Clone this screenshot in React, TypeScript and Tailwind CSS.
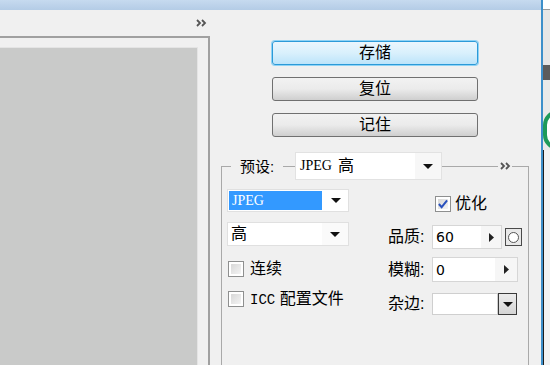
import React from "react";

const line = "border-[#a9a9a9]";

function Arrow({ dir = "down" }: { dir?: "down" | "right" }) {
  if (dir === "right")
    return (
      <svg width="5" height="9" viewBox="0 0 5 9">
        <path d="M0 0 L5 4.5 L0 9 Z" fill="#222" />
      </svg>
    );
  return (
    <svg width="10" height="5" viewBox="0 0 10 5">
      <path d="M0 0 L10 0 L5 5 Z" fill="#111" />
    </svg>
  );
}

function Chevrons() {
  return (
    <svg width="11" height="8" viewBox="0 0 11 8">
      <path d="M1 1 L4 4 L1 7 M6 1 L9 4 L6 7" stroke="#555" strokeWidth="1.8" fill="none" />
    </svg>
  );
}

function CheckBox({ checked = false }: { checked?: boolean }) {
  return (
    <div className="w-[16px] h-[16px] border border-[#8e8f8f] bg-white p-[2px]">
      <div className="w-full h-full bg-gradient-to-br from-[#d8d8d8] to-[#f4f4f4] flex items-center justify-center">
        {checked && (
          <svg width="11" height="10" viewBox="0 0 11 10">
            <path d="M1 5 L4 8.5 L10 1" stroke="#2a52be" strokeWidth="2.2" fill="none" />
          </svg>
        )}
      </div>
    </div>
  );
}

function Btn({ label, focus = false }: { label: string; focus?: boolean }) {
  return (
    <div
      className={
        focus
          ? "w-[206px] h-[24px] rounded-[3px] border border-[#2c9ad8] shadow-[0_0_0_1px_#8fd3f5] bg-gradient-to-b from-[#eaf6fd] via-[#d9f0fc] to-[#bce4fa] flex items-center justify-center text-[16px] leading-none"
          : "w-[206px] h-[24px] rounded-[3px] border border-[#707070] bg-gradient-to-b from-[#f2f2f2] via-[#ebebeb] to-[#cfcfcf] flex items-center justify-center text-[16px] leading-none"
      }
    >
      {label}
    </div>
  );
}

export default function App() {
  return (
    <div className="w-[550px] h-[365px] overflow-hidden bg-[#f0f0f0] flex text-black font-['Liberation_Sans','Noto_Sans_CJK_SC',sans-serif]">
      {/* main window */}
      <div className="w-[541px] flex flex-col">
        <div className="h-[10px] bg-gradient-to-b from-[#c6daef] to-[#b4cce6]" />
        <div className="flex flex-1">
          {/* left preview panel */}
          <div className="w-[210px] flex flex-col">
            <div className="h-[26px] flex items-center justify-end pr-[3px]">
              <Chevrons />
            </div>
            <div className="flex-1 border-t-2 border-r-2 border-[#a0a0a0] pt-[9px] pr-[10px]">
              <div className="h-full bg-[#c9cac9] border-t border-r border-[#e4e4e4]" />
            </div>
          </div>

          {/* right settings panel */}
          <div className="w-[331px] flex flex-col">
            <div className="pl-[62px] pt-[31px] flex flex-col gap-[12px]">
              <Btn label="存储" focus />
              <Btn label="复位" />
              <Btn label="记住" />
            </div>

            {/* group box header */}
            <div className="ml-[11px] w-[308px] mt-[15px] h-[28px] flex">
              <div className={`w-[10px] h-[14px] self-end border-t border-l ${line}`} />
              <div className="w-[52px] flex items-center justify-center text-[15px] leading-none">预设:</div>
              <div className={`w-[12px] h-[14px] self-end border-t ${line}`} />
              <div className="w-[147px] h-[28px] bg-white border border-[#e2e2e2] flex items-center">
                <div className="flex-1 pl-[4px] text-[16px] leading-none flex items-center gap-[6px]">
                  <span className="font-['Liberation_Serif',serif] text-[14px]">JPEG</span>
                  <span>高</span>
                </div>
                <div className="w-[26px] h-full bg-[#f7f7f7] flex items-center justify-center">
                  <Arrow />
                </div>
              </div>
              <div className={`w-[56px] h-[14px] self-end border-t ${line}`} />
              <div className="w-[14px] flex items-center justify-center">
                <Chevrons />
              </div>
              <div className={`flex-1 h-[14px] self-end border-t border-r ${line}`} />
            </div>

            {/* group box body */}
            <div className={`ml-[11px] w-[308px] flex-1 border-l border-r ${line} flex`}>
              <div className="pl-[5px] pt-[9px] w-[133px] flex flex-col">
                <div className="w-[122px] h-[23px] bg-white border border-[#e0e0e0] flex items-center p-[1px]">
                  <div className="w-[93px] h-full bg-[#3399ff] text-white flex items-center pl-[3px] font-['Liberation_Serif',serif] text-[14px] leading-none">
                    JPEG
                  </div>
                  <div className="flex-1 flex items-center justify-end pr-[6px]">
                    <Arrow />
                  </div>
                </div>
                <div className="mt-[10px] w-[122px] h-[24px] bg-white border border-[#e0e0e0] flex items-center">
                  <div className="flex-1 pl-[3px] text-[16px] leading-none">高</div>
                  <div className="w-[26px] h-full bg-[#fafafa] flex items-center justify-center">
                    <Arrow />
                  </div>
                </div>
                <div className="mt-[15px] flex items-center gap-[6px] ml-[1px]">
                  <CheckBox />
                  <span className="text-[16px] leading-none">连续</span>
                </div>
                <div className="mt-[14px] flex items-center gap-[6px] ml-[1px]">
                  <CheckBox />
                  <span className="text-[16px] leading-none">
                    <span className="font-['Liberation_Mono',monospace] text-[14px]">ICC</span> 配置文件
                  </span>
                </div>
              </div>

              <div className="pl-[33px] flex flex-col">
                <div className="mt-[16px] pl-[47px] flex items-center gap-[4px]">
                  <CheckBox checked />
                  <span className="text-[16px] leading-none">优化</span>
                </div>
                <div className="mt-[13px] flex items-center">
                  <div className="w-[44px] text-[16px] leading-none">品质:</div>
                  <div className="w-[70px] h-[24px] bg-white border border-[#d6d6d6] flex items-center">
                    <div className="flex-1 pl-[3px] text-[14px] leading-none font-['DejaVu_Sans',sans-serif]">60</div>
                    <div className="w-[20px] h-full bg-[#f6f6f6] flex items-center justify-center">
                      <Arrow dir="right" />
                    </div>
                  </div>
                  <div className="ml-[3px] w-[17px] h-[18px] border border-[#4a4a4a] bg-[#e8e8e8] flex items-center justify-center">
                    <div className="w-[11px] h-[11px] rounded-full border border-[#555] bg-white" />
                  </div>
                </div>
                <div className="mt-[8px] flex items-center">
                  <div className="w-[44px] text-[16px] leading-none">模糊:</div>
                  <div className="w-[86px] h-[25px] bg-white border border-[#d6d6d6] flex items-center">
                    <div className="flex-1 pl-[3px] text-[14px] leading-none font-['DejaVu_Sans',sans-serif]">0</div>
                    <div className="w-[22px] h-full bg-[#f6f6f6] flex items-center justify-center">
                      <Arrow dir="right" />
                    </div>
                  </div>
                </div>
                <div className="mt-[11px] flex items-center">
                  <div className="w-[44px] text-[16px] leading-none">杂边:</div>
                  <div className="w-[66px] h-[22px] bg-white border border-[#cfcfcf]" />
                  <div className="w-[19px] h-[22px] border border-[#3a3a3a] bg-gradient-to-b from-[#ececec] to-[#d4d4d4] flex items-center justify-center">
                    <Arrow />
                  </div>
                </div>
              </div>
            </div>
          </div>
        </div>
      </div>

      {/* edge of the window behind */}
      <div className="w-[9px] flex flex-col border-l-2 border-[#3d8fca] overflow-hidden">
        <div className="h-[10px] bg-white border-b border-[#9a9a9a]" />
        <div className="h-[55px] bg-[#e6e6e6]" />
        <div className="h-[15px] bg-[#5c5c5c]" />
        <div className="h-[30px] bg-[#e9e9e9]" />
        <div className="h-[40px] bg-[#e9e9e9] flex">
          <div className="w-[30px] h-[40px] shrink-0 rounded-full border-[4px] border-[#1e9a5a] bg-white" />
        </div>
        <div className="flex-1 bg-[#f2f2f2] border-l border-[#1d1d1d]" />
      </div>
    </div>
  );
}
